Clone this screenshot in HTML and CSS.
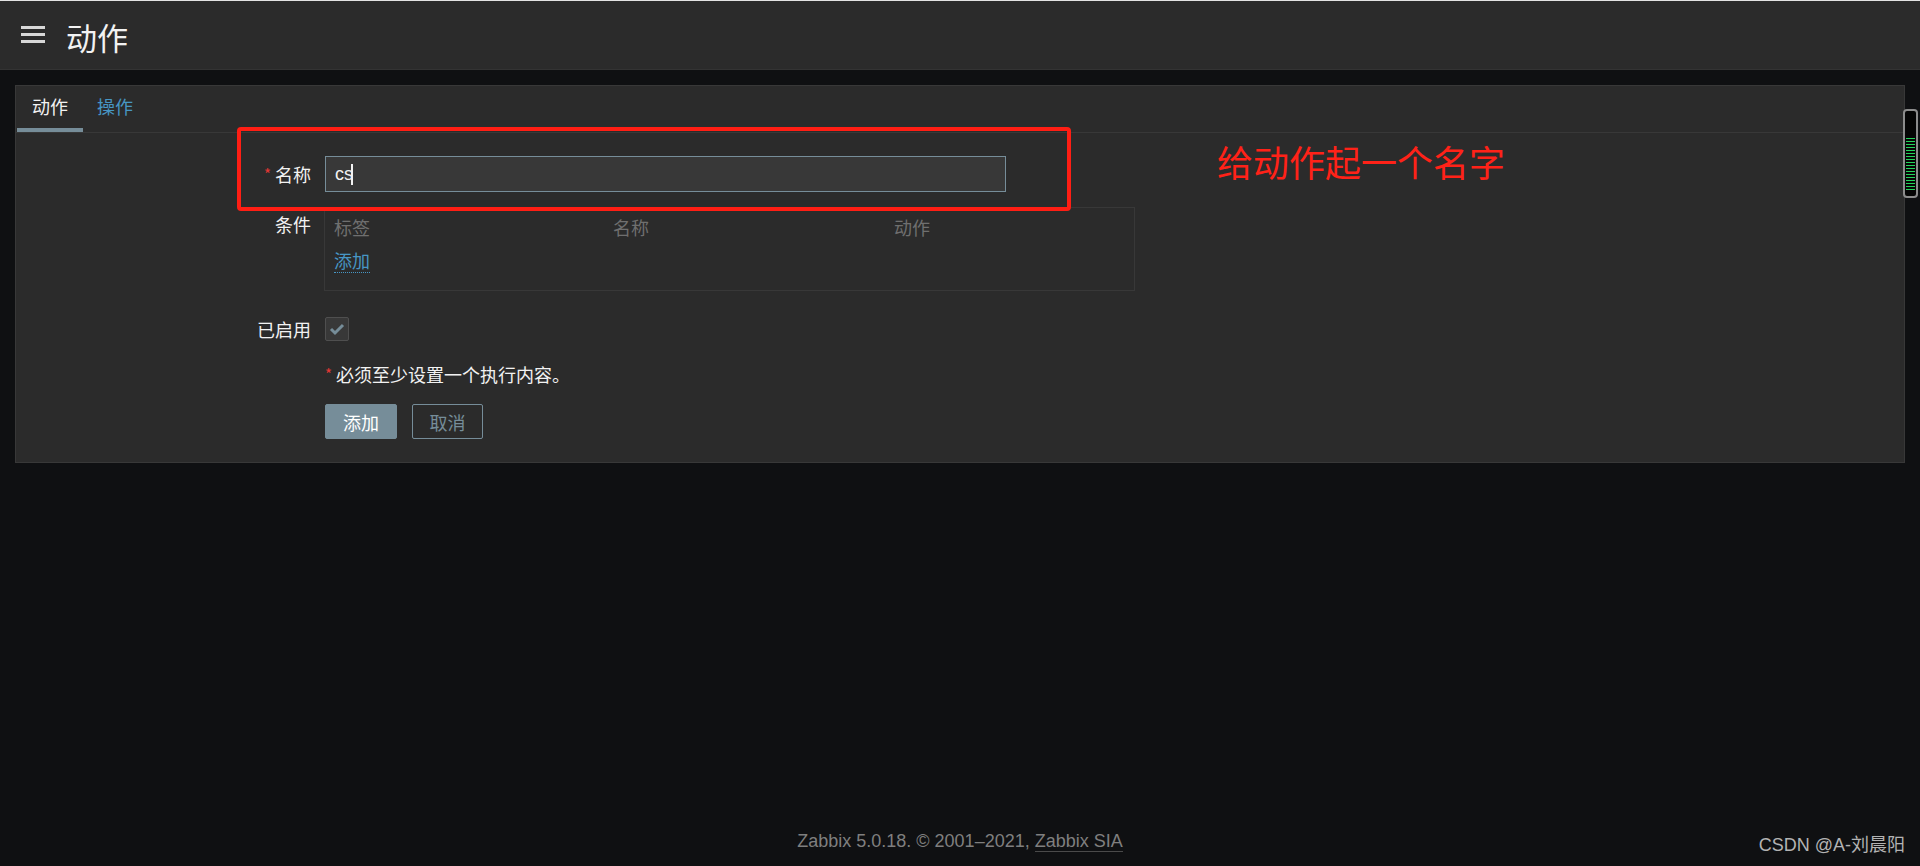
FILE: index.html
```html
<!DOCTYPE html>
<html lang="zh-CN">
<head>
    <meta charset="utf-8">
    <title>动作</title>
    <link rel="stylesheet" href="styles.css">
</head>
<body>

    <header class="topbar">
        <span class="menu-btn">
            <svg width="24" height="17" viewBox="0 0 24 17"><rect y="0" width="24" height="3" fill="#d8d8d8"/><rect y="7" width="24" height="3" fill="#d8d8d8"/><rect y="14" width="24" height="3" fill="#d8d8d8"/></svg>
        </span>
        <h1>动作</h1>
    </header>

    <main class="main">
        <div class="panel">
            <ul class="tabs">
                <li class="tab active">动作</li>
                <li class="tab"><a href="#">操作</a></li>
            </ul>

            <form class="form" id="actionForm">
                <div class="row row-name">
                    <label class="lbl" for="name"><span class="req">*</span> 名称</label>
                    <div class="field"><input type="text" id="name" value="cs" class="text-input"><span class="caret"></span></div>
                </div>

                <div class="row row-cond">
                    <label class="lbl">条件</label>
                    <div class="field">
                        <div class="cond-box">
                            <div class="cond-head">
                                <span>标签</span>
                                <span>名称</span>
                                <span>动作</span>
                            </div>
                            <div class="cond-add"><a href="#" class="link">添加</a></div>
                        </div>
                    </div>
                </div>

                <div class="row row-enabled">
                    <label class="lbl" for="status">已启用</label>
                    <div class="field">
                        <span class="checkbox">
                            <svg width="16" height="14" viewBox="0 0 16 14"><polyline points="2,7 6,11 14,3" fill="none" stroke="#768d99" stroke-width="3"/></svg>
                        </span>
                    </div>
                </div>

                <div class="row row-note">
                    <span class="lbl"></span>
                    <div class="field note"><span class="req">*</span> 必须至少设置一个执行内容。</div>
                </div>

                <div class="row row-buttons">
                    <span class="lbl"></span>
                    <div class="field buttons">
                        <button type="button" class="btn">添加</button>
                        <button type="button" class="btn btn-alt">取消</button>
                    </div>
                </div>
            </form>
        </div>
    </main>

    <footer class="footer">
        Zabbix 5.0.18. &copy; 2001&ndash;2021, <a href="#" class="footer-link">Zabbix SIA</a>
        <span class="watermark">CSDN @A-刘晨阳</span>
    </footer>

    <!-- callout around the name field -->
    <div class="callout-box"></div>
    <div class="callout-text">给动作起一个名字</div>

    <!-- little level meter on the right edge -->
    <div class="meter"><div class="meter-bars"></div></div>

</body>
</html>
```

FILE: styles.css
```css
body {
    margin: 0;
    height: 866px;
    overflow: hidden;
    background-color: #0f1012;
    font-family: "Liberation Sans", Arial, "Noto Sans CJK SC", sans-serif;
    color: #f2f2f2;
    display: flex;
    flex-direction: column;
    position: relative;
}

.topbar {
    height: 68px;
    border-top: 1px solid #e3e3e3;
    border-bottom: 1px solid #333;
    background-color: #2b2b2b;
    display: flex;
    align-items: center;
    padding-left: 21px;
}

.menu-btn {
    display: flex;
    width: 24px;
    margin-right: 21px;
    margin-top: -2px;
}

.topbar h1 {
    margin: 0;
    font-family: "Noto Sans CJK SC", sans-serif;
    font-weight: normal;
    font-size: 31px;
    color: #f2f2f2;
    line-height: 1;
    margin-top: 2px;
}

.main {
    flex: 1;
    padding: 15px;
}

.panel {
    background-color: #2b2b2b;
    border: 1px solid #383838;
}

.tabs {
    list-style: none;
    margin: 0;
    padding: 0 0 0 1px;
    display: flex;
    border-bottom: 1px solid #383838;
}

.tab {
    height: 42px;
    line-height: 41px;
    padding: 0 15px;
    font-family: "Noto Sans CJK SC", sans-serif;
    font-size: 18px;
    border-bottom: 4px solid transparent;
}

.tab.active {
    border-bottom-color: #768d99;
    color: #f2f2f2;
}

.tab + .tab {
    padding-left: 14px;
}

.tab a {
    color: #4796c4;
    text-decoration: none;
}

.form {
    padding: 23px 0 23px;
    font-family: "Noto Sans CJK SC", sans-serif;
    font-size: 18px;
}

.row {
    display: grid;
    grid-template-columns: 295px 1fr;
    column-gap: 13px;
}

.lbl {
    text-align: right;
    line-height: 35px;
    color: #f2f2f2;
}

.req {
    color: #e33734;
    font-size: 15px;
    vertical-align: 2px;
}

.field {
    position: relative;
}

.text-input {
    width: 681px;
    height: 36px;
    box-sizing: border-box;
    background-color: #383838;
    border: 1px solid #768d99;
    color: #f2f2f2;
    font-family: "Liberation Sans", Arial, sans-serif;
    font-size: 18px;
    padding: 0 9px;
    margin: 0 0 0 1px;
    outline: none;
}

.caret {
    position: absolute;
    left: 27px;
    top: 8px;
    width: 2px;
    height: 21px;
    background-color: #f2f2f2;
}

.row-cond {
    margin-top: 15px;
}

.cond-box {
    width: 811px;
    box-sizing: border-box;
    border: 1px solid #383838;
    padding: 7px 9px 17px;
}

.cond-head {
    display: grid;
    grid-template-columns: 279px 281px 1fr;
    line-height: 24px;
    color: #6f6f6f;
}

.cond-add {
    margin-top: 9px;
    line-height: 24px;
}

.link {
    display: inline-block;
    color: #4796c4;
    text-decoration: none;
    line-height: 23px;
    border-bottom: 1px dotted #4796c4;
}

.row-enabled {
    margin-top: 26px;
    align-items: center;
}

.row-enabled .lbl {
    line-height: 24px;
}

.checkbox {
    display: flex;
    align-items: center;
    justify-content: center;
    width: 24px;
    height: 24px;
    box-sizing: border-box;
    background-color: #383838;
    border: 1px solid #4f4f4f;
    border-radius: 2px;
    margin-left: 1px;
}

.row-note {
    margin-top: 21px;
}

.note {
    line-height: 24px;
    color: #f2f2f2;
    padding-left: 1px;
}

.row-note .lbl {
    line-height: 24px;
}

.row-buttons {
    margin-top: 18px;
}

.buttons {
    display: flex;
    gap: 15px;
    padding-left: 1px;
}

.btn {
    height: 35px;
    width: 72px;
    background-color: #768d99;
    color: #fff;
    border: 1px solid #768d99;
    border-radius: 2px;
    font-family: "Noto Sans CJK SC", sans-serif;
    font-size: 18px;
    padding: 0;
    cursor: pointer;
}

.btn-alt {
    width: 71px;
    background-color: transparent;
    color: #768d99;
}

.footer {
    height: 50px;
    line-height: 50px;
    text-align: center;
    font-size: 18px;
    color: #7f7f7f;
    position: relative;
}

.footer-link {
    color: #7f7f7f;
    text-decoration: none;
    border-bottom: 1px solid #4a4a4a;
}

.watermark {
    position: absolute;
    right: 15px;
    top: 4px;
    font-family: "Liberation Sans", Arial, "Noto Sans CJK SC", sans-serif;
    font-size: 18px;
    color: #b3b3b3;
}

.callout-box {
    position: absolute;
    left: 237px;
    top: 127px;
    width: 834px;
    height: 84px;
    box-sizing: border-box;
    border: 4px solid #ff1e14;
    border-radius: 4px;
}

.callout-text {
    position: absolute;
    left: 1217px;
    top: 136px;
    font-family: "Noto Sans CJK SC", sans-serif;
    font-size: 36px;
    line-height: 50px;
    color: #ff2218;
}

.meter {
    position: absolute;
    left: 1903px;
    top: 109px;
    width: 15px;
    height: 89px;
    box-sizing: border-box;
    background-color: #050505;
    border: 2px solid #8c8c8c;
    border-radius: 4px;
}

.meter-bars {
    position: absolute;
    left: 1px;
    right: 1px;
    top: 27px;
    bottom: 4px;
    background: repeating-linear-gradient(to bottom, #22d45a 0, #22d45a 1px, transparent 1px, transparent 3px);
}
```
